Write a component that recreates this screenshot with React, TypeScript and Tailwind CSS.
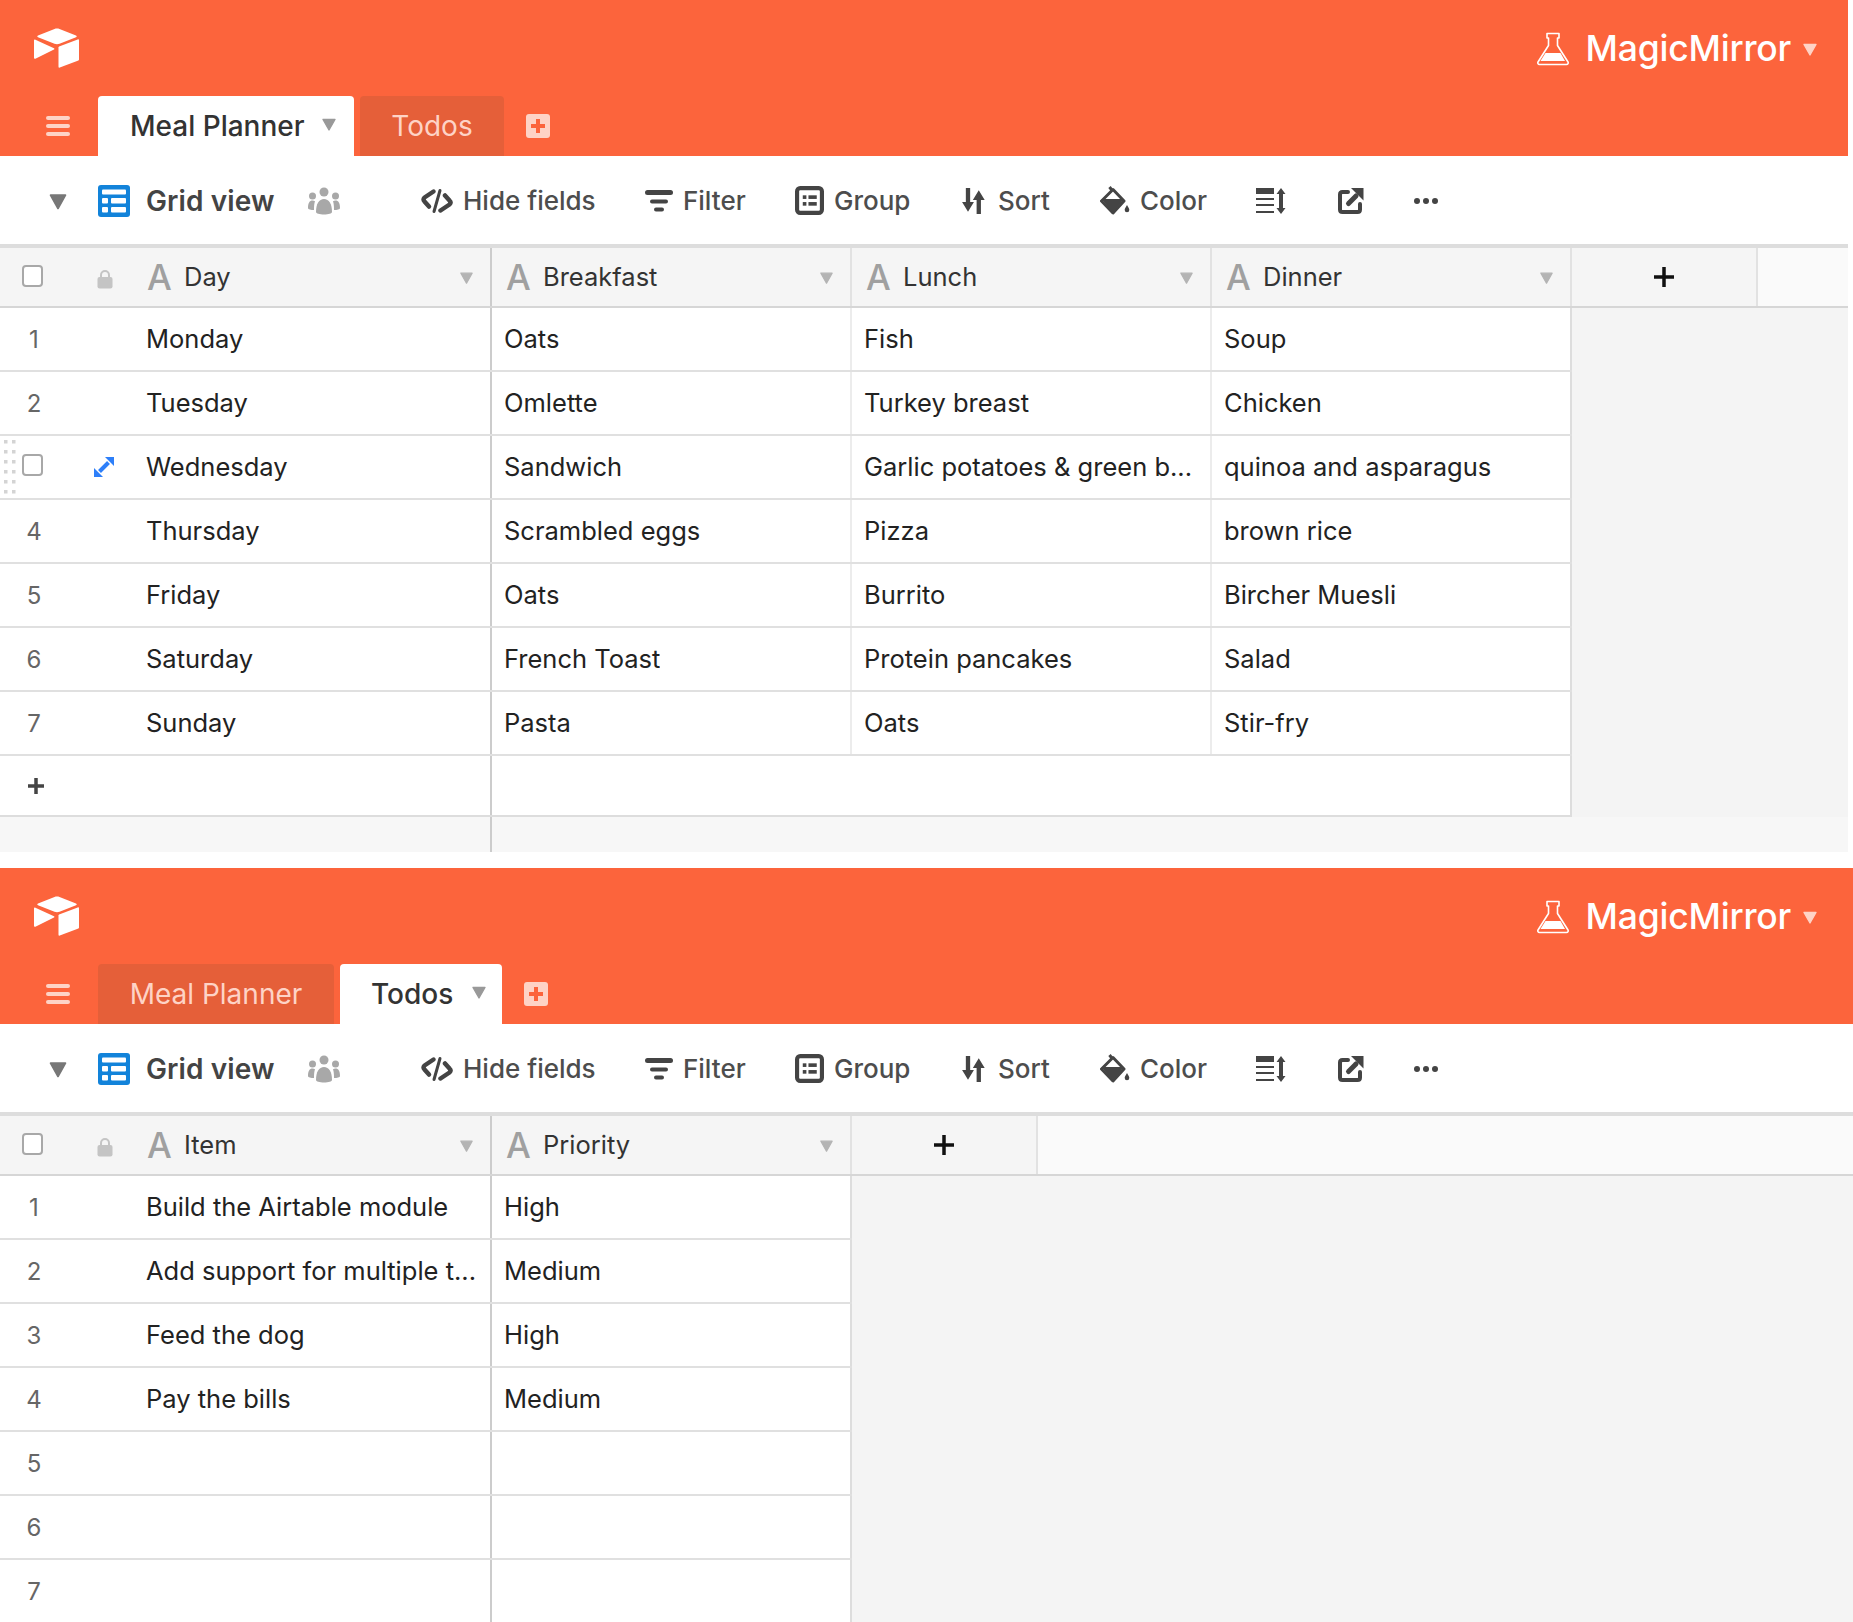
const dayRows = [
  ['Monday', 'Oats', 'Fish', 'Soup'],
  ['Tuesday', 'Omlette', 'Turkey breast', 'Chicken'],
  ['Wednesday', 'Sandwich', 'Garlic potatoes & green b...', 'quinoa and asparagus'],
  ['Thursday', 'Scrambled eggs', 'Pizza', 'brown rice'],
  ['Friday', 'Oats', 'Burrito', 'Bircher Muesli'],
  ['Saturday', 'French Toast', 'Protein pancakes', 'Salad'],
  ['Sunday', 'Pasta', 'Oats', 'Stir-fry'],
];

const todoRows = [
  ['Build the Airtable module', 'High'],
  ['Add support for multiple t...', 'Medium'],
  ['Feed the dog', 'High'],
  ['Pay the bills', 'Medium'],
  ['', ''],
  ['', ''],
  ['', ''],
];

function Caret({ size, color }: { size: number; color: string }) {
  return (
    <svg width={size} height={size} viewBox="0 0 12 12" className="shrink-0">
      <path d="M1.5 2.5h9L6 10.5z" fill={color} stroke={color} strokeWidth="1" strokeLinejoin="round" />
    </svg>
  );
}

function Logo() {
  return (
    <svg width="48" height="42" viewBox="0 0 48 42" className="ml-[33px] shrink-0">
      <path d="M21.5 1 5 7.5c-1 .4-1 1.300 0 1.700L21.500 15.800c1.600.6 3.400.6 5 0L43 9.200c1-.4 1-1.300 0-1.700L26.500 1c-1.600-.6-3.400-.6-5 0z" fill="#fff" />
      <path d="M25.500 19.500v19.200c0 .7.700 1.100 1.300.9l18.600-7.200c.4-.2.600-.5.600-.9V12.300c0-.7-.7-1.100-1.300-.9L26.100 18.600c-.4.200-.6.500-.6.900z" fill="#fff" />
      <path d="M1 12.500v17.300c0 .7.800 1.200 1.400.9L21 21.500c.5-.3.500-1 0-1.200L2.400 11.700c-.6-.3-1.400.1-1.400.8z" fill="#fff" />
    </svg>
  );
}

function Flask() {
  return (
    <svg width="34" height="34" viewBox="0 0 34 34" className="shrink-0">
      <path d="M11 1.500h12v4.500h-1.500v7.500L32 30c.7 1.200-.1 2.500-1.500 2.500h-27C2.100 32.500 1.300 31.200 2 30l10.500-16.500V6H11z" fill="none" stroke="#fff" strokeWidth="1.600" strokeLinejoin="round" />
      <path d="M9.500 21h15l4.500 8H4.500z" fill="#fff" />
    </svg>
  );
}

function Hamburger() {
  return (
    <div className="ml-[46px] mr-[28px] mb-[20px] flex w-[24px] shrink-0 flex-col gap-[4px]">
      <div className="h-[4px] rounded-full bg-[#fed3c6]" />
      <div className="h-[4px] rounded-full bg-[#fed3c6]" />
      <div className="h-[4px] rounded-full bg-[#fed3c6]" />
    </div>
  );
}

function PlusBox() {
  return (
    <svg width="24" height="24" viewBox="0 0 24 24" className="shrink-0">
      <rect width="24" height="24" rx="3" fill="#fed3c6" />
      <path d="M12 5v14M5 12h14" stroke="#fc643c" strokeWidth="4" />
    </svg>
  );
}

function GridIcon() {
  return (
    <svg width="32" height="32" viewBox="0 0 32 32" className="shrink-0">
      <rect width="32" height="32" rx="3" fill="#1283da" />
      <rect x="4" y="4.500" width="24" height="5" rx="1" fill="#fff" />
      <rect x="4" y="13" width="6" height="5.500" rx="1" fill="#fff" />
      <rect x="13" y="13" width="15" height="5.500" rx="1" fill="#fff" />
      <rect x="4" y="22" width="6" height="5.500" rx="1" fill="#fff" />
      <rect x="13" y="22" width="15" height="5.500" rx="1" fill="#fff" />
    </svg>
  );
}

function People() {
  return (
    <svg width="32" height="28" viewBox="0 0 32 28" className="shrink-0" fill="#a8a8a8">
      <circle cx="16" cy="5" r="4.500" />
      <circle cx="4.500" cy="9" r="3.500" />
      <circle cx="27.500" cy="9" r="3.500" />
      <path d="M8 25c0-8 3-13 8-13s8 5 8 13c0 1.500-3.500 2.500-8 2.500S8 26.500 8 25z" />
      <path d="M0 21c0-5 1.500-7.500 4.500-7.500 1 0 1.800.3 2.500.8-.8 2-1 5-1 8.700-3 0-6-.6-6-2z" />
      <path d="M32 21c0-5-1.500-7.500-4.500-7.500-1 0-1.800.3-2.500.8.800 2 1 5 1 8.700 3 0 6-.6 6-2z" />
    </svg>
  );
}

function HideIcon() {
  return (
    <svg width="32" height="26" viewBox="0 0 32 26" className="shrink-0" fill="none" stroke="#444" strokeWidth="4.500" strokeLinecap="round" strokeLinejoin="round">
      <path d="M12.500 3.500 3.500 9.500Q1.500 11.500 3.500 13.500L8 18.500" />
      <path d="M19.500 22.500 28.500 16.500Q30.500 14.500 28.500 12.500L24 7.500" />
      <path d="M19 2.500 13 23.500" strokeWidth="3" />
    </svg>
  );
}

function FilterIcon() {
  return (
    <svg width="28" height="24" viewBox="0 0 28 24" className="shrink-0" fill="#444">
      <rect x="0" y="1" width="28" height="5" rx="2.500" />
      <rect x="5" y="10.500" width="18" height="4" rx="2" />
      <rect x="9" y="18.500" width="10" height="4" rx="2" />
    </svg>
  );
}

function GroupIcon() {
  return (
    <svg width="29" height="29" viewBox="0 0 28 28" className="shrink-0">
      <rect x="2" y="2" width="24" height="24" rx="3" fill="none" stroke="#444" strokeWidth="4" />
      <rect x="7.500" y="9" width="3.500" height="3.500" fill="#444" />
      <rect x="13" y="9" width="8" height="3.500" fill="#444" />
      <rect x="7.500" y="15.500" width="3.500" height="3.500" fill="#444" />
      <rect x="13" y="15.500" width="8" height="3.500" fill="#444" />
    </svg>
  );
}

function SortIcon() {
  return (
    <svg width="26" height="28" viewBox="0 0 24 26" className="shrink-0" fill="#444">
      <path d="M3.500 1h4v13H11l-5.500 9L0 14h3.500z" />
      <path d="M17.500 25h-4V12H10l5.500-9L21 12h-3.500z" />
    </svg>
  );
}

function ColorIcon() {
  return (
    <svg width="30" height="30" viewBox="0 0 30 30" className="shrink-0">
      <path d="M9.500 1l3.500 4.500" stroke="#444" strokeWidth="3" fill="none" />
      <path d="M13 3.500 24 15 13 27 1.500 15z" fill="#fff" stroke="#444" strokeWidth="3" strokeLinejoin="round" />
      <path d="M1.500 13h22.500L13 27z" fill="#444" />
      <path d="M27 19c1.500 2.500 2.300 3.800 2.300 5a2.300 2.300 0 0 1-4.600 0c0-1.200.8-2.500 2.300-5z" fill="#444" />
    </svg>
  );
}

function RowHeightIcon() {
  return (
    <svg width="30" height="28" viewBox="0 0 30 28" className="shrink-0" fill="#444">
      <rect x="0" y="1" width="18" height="6" />
      <rect x="0" y="11" width="18" height="2" />
      <rect x="0" y="17" width="18" height="2" />
      <rect x="0" y="24" width="18" height="2" />
      <path d="M25 1l4.500 6H27v14h2.500L25 27l-4.500-6H23V7h-2.500z" />
    </svg>
  );
}

function ShareIcon() {
  return (
    <svg width="26" height="26" viewBox="0 0 26 26" className="shrink-0" fill="none">
      <path d="M10 4H4.500C3 4 2 5 2 6.500v15C2 23 3 24 4.500 24h15c1.500 0 2.500-1 2.500-2.500V16" stroke="#444" strokeWidth="4" strokeLinecap="round" />
      <path d="M10.500 15.500 18 8" stroke="#444" strokeWidth="5" strokeLinecap="round" />
      <path d="M13 0h12.500v12.500z" fill="#444" />
    </svg>
  );
}

function Dots() {
  return (
    <svg width="24" height="8" viewBox="0 0 24 8" className="shrink-0" fill="#444">
      <circle cx="3" cy="4" r="3" />
      <circle cx="12" cy="4" r="3" />
      <circle cx="21" cy="4" r="3" />
    </svg>
  );
}

function Lock() {
  return (
    <svg width="16" height="20" viewBox="0 0 16 20" className="shrink-0">
      <path d="M4 9V6a4 4 0 0 1 8 0v3" fill="none" stroke="#c4c4c4" strokeWidth="2" />
      <rect x="0.500" y="8" width="15" height="11.500" rx="2" fill="#c4c4c4" />
    </svg>
  );
}

function Expand() {
  return (
    <svg width="22" height="22" viewBox="0 0 22 22" className="shrink-0" fill="#2d7ff9">
      <path d="M12 1h9v9z" />
      <path d="M1 12v9h9z" />
      <path d="M6.500 15.500 15.500 6.500" stroke="#2d7ff9" strokeWidth="4" />
    </svg>
  );
}

function Checkbox() {
  return <div className="h-[22px] w-[21px] shrink-0 rounded-[4px] border-2 border-[#a8a8a8] bg-white" />;
}

function DragDots() {
  return (
    <svg width="12" height="56" viewBox="0 0 12 56" className="absolute left-[4px] top-[4px]" fill="#d4d4d4">
      {[0, 10, 20, 30, 40, 50].map((y) => (
        <g key={y}>
          <rect x="0" y={y} width="3.500" height="3.500" />
          <rect x="8" y={y} width="3.500" height="3.500" />
        </g>
      ))}
    </svg>
  );
}

function HeaderBar({ activeFirst, tabs, endGap }: { activeFirst: boolean; tabs: string[]; endGap: string }) {
  return (
    <div className="h-[156px] bg-[#fc643c]">
      <div className="flex h-[96px] items-center pt-[2px]">
        <Logo />
        <div className={`ml-auto flex items-center ${endGap}`}>
          <Flask />
          <span className="ml-[15px] text-[35.5px] font-medium leading-none tracking-[-0.2px] text-white">MagicMirror</span>
          <div className="ml-[11px]">
            <Caret size={16} color="#fed3c6" />
          </div>
        </div>
      </div>
      <div className="flex h-[60px] items-end">
        <Hamburger />
        {activeFirst ? (
          <>
            <div className="flex h-[60px] w-[256px] items-center rounded-t-[4px] bg-white pl-[32px]">
              <span className="text-[28px] font-medium leading-none text-[#333]">{tabs[0]}</span>
              <div className="ml-[16px] mb-[4px]">
                <Caret size={16} color="#999" />
              </div>
            </div>
            <div className="ml-[6px] flex h-[60px] w-[144px] items-center justify-center rounded-t-[4px] bg-[#e55f39]">
              <span className="text-[28px] leading-none text-[#fed3c6]">{tabs[1]}</span>
            </div>
            <div className="mb-[18px] ml-[22px]">
              <PlusBox />
            </div>
          </>
        ) : (
          <>
            <div className="flex h-[60px] w-[236px] items-center justify-center rounded-t-[4px] bg-[#e55f39]">
              <span className="text-[28px] leading-none text-[#fed3c6]">{tabs[0]}</span>
            </div>
            <div className="ml-[6px] flex h-[60px] w-[162px] items-center rounded-t-[4px] bg-white pl-[31px]">
              <span className="text-[28px] font-medium leading-none text-[#333]">{tabs[1]}</span>
              <div className="ml-[18px] mb-[4px]">
                <Caret size={16} color="#999" />
              </div>
            </div>
            <div className="mb-[18px] ml-[22px]">
              <PlusBox />
            </div>
          </>
        )}
      </div>
    </div>
  );
}

function ToolItem({ className, icon, label }: { className: string; icon: React.ReactNode; label: string }) {
  return (
    <div className={`flex shrink-0 items-center gap-[10px] ${className}`}>
      {icon}
      <span className="text-[26px] font-medium leading-none text-[#4d4d4d]">{label}</span>
    </div>
  );
}

function Toolbar() {
  return (
    <div className="flex h-[88px] items-center bg-white pt-[1px]">
      <div className="ml-[48px] mr-[30px]">
        <Caret size={20} color="#777" />
      </div>
      <GridIcon />
      <span className="ml-[16px] w-[128px] whitespace-nowrap text-[28px] font-semibold leading-none tracking-[0.1px] text-[#444]">Grid view</span>
      <div className="ml-[34px] mr-[81px]">
        <People />
      </div>
      <ToolItem className="w-[224px]" icon={<HideIcon />} label="Hide fields" />
      <ToolItem className="w-[150px]" icon={<FilterIcon />} label="Filter" />
      <ToolItem className="w-[167px]" icon={<GroupIcon />} label="Group" />
      <ToolItem className="w-[138px]" icon={<SortIcon />} label="Sort" />
      <ToolItem className="w-[156px] gap-[9px]" icon={<ColorIcon />} label="Color" />
      <div className="w-[82px] shrink-0">
        <RowHeightIcon />
      </div>
      <div className="w-[76px] shrink-0">
        <ShareIcon />
      </div>
      <Dots />
    </div>
  );
}

function ColumnTitle({ name }: { name: string }) {
  return (
    <>
      <span className="w-[37px] shrink-0 text-[35px] font-medium leading-none text-[#a0a0a0]">A</span>
      <span className="text-[25.5px] leading-none text-[#333]">{name}</span>
      <div className="ml-auto">
        <Caret size={15} color="#b4b4b4" />
      </div>
    </>
  );
}

function ColumnHeader({ first, others }: { first: string; others: string[] }) {
  return (
    <div className="flex h-[64px] border-t-4 border-b-2 border-t-[#dddddd] border-b-[#d6d6d6] bg-[#fafafa]">
      <div className="flex w-[492px] shrink-0 items-center border-r-2 border-r-[#cccccc] bg-[#f5f5f5] pl-[22px] pr-[16px]">
        <div className="mb-[2px]">
          <Checkbox />
        </div>
        <div className="ml-[54px] mr-[34px] mt-[4px]">
          <Lock />
        </div>
        <ColumnTitle name={first} />
      </div>
      {others.map((name) => (
        <div key={name} className="flex w-[360px] shrink-0 items-center border-r-2 border-r-[#e2e2e2] bg-[#f5f5f5] pl-[14px] pr-[16px]">
          <ColumnTitle name={name} />
        </div>
      ))}
      <div className="flex w-[186px] shrink-0 items-center justify-center border-r-2 border-r-[#e2e2e2] bg-[#f5f5f5]">
        <svg width="20" height="20" viewBox="0 0 20 20">
          <path d="M10 0v20M0 10h20" stroke="#111" strokeWidth="3.500" />
        </svg>
      </div>
    </div>
  );
}

function DataRow({ num, cells, hovered }: { num: number; cells: string[]; hovered?: boolean }) {
  return (
    <div className="relative flex h-[64px] border-b-2 border-b-[#e0e0e0] bg-white">
      <div className="flex w-[492px] shrink-0 items-center border-r-2 border-r-[#cccccc]">
        {hovered ? (
          <>
            <DragDots />
            <div className="ml-[22px] mr-[50px] mb-[4px]">
              <Checkbox />
            </div>
            <div className="mr-[31px]">
              <Expand />
            </div>
          </>
        ) : (
          <span className="mt-[2px] w-[146px] shrink-0 pr-[78px] text-center text-[24px] leading-none text-[#666]">{num}</span>
        )}
        <span className="truncate text-[25.5px] leading-[36px] text-[#222]">{cells[0]}</span>
      </div>
      {cells.slice(1).map((cell, i) => (
        <div key={i} className="flex w-[360px] shrink-0 items-center border-r-2 border-r-[#ececec] pl-[12px] last:border-r-[#dddddd]">
          <span className="truncate text-[25.5px] leading-[36px] text-[#222]">{cell}</span>
        </div>
      ))}
    </div>
  );
}

export default function App() {
  return (
    <div className="h-[1622px] w-[1853px] overflow-hidden bg-white font-['Inter',sans-serif] antialiased">
      <div className="h-[852px] w-[1848px] bg-[#f4f4f4]">
        <HeaderBar activeFirst tabs={['Meal Planner', 'Todos']} endGap="mr-[30px]" />
        <Toolbar />
        <ColumnHeader first="Day" others={['Breakfast', 'Lunch', 'Dinner']} />
        <div className="w-[1572px]">
          {dayRows.map((cells, i) => (
            <DataRow key={i} num={i + 1} cells={cells} hovered={i === 2} />
          ))}
          <div className="flex h-[61px] border-b-2 border-r-2 border-b-[#dddddd] border-r-[#dddddd] bg-white">
            <div className="flex w-[492px] shrink-0 items-center border-r-2 border-r-[#cccccc] pl-[28px]">
              <svg width="16" height="16" viewBox="0 0 16 16">
                <path d="M8 0v16M0 8h16" stroke="#444" strokeWidth="3.500" />
              </svg>
            </div>
          </div>
          <div className="h-[35px] w-[1848px] bg-[#f7f7f7]">
            <div className="h-[35px] w-[492px] border-r-2 border-r-[#cccccc]" />
          </div>
        </div>
      </div>
      <div className="mt-[16px] h-[754px] bg-[#f4f4f4]">
        <HeaderBar activeFirst={false} tabs={['Meal Planner', 'Todos']} endGap="mr-[35px]" />
        <Toolbar />
        <ColumnHeader first="Item" others={['Priority']} />
        <div className="w-[852px]">
          {todoRows.map((cells, i) => (
            <DataRow key={i} num={i + 1} cells={cells} />
          ))}
        </div>
      </div>
    </div>
  );
}
